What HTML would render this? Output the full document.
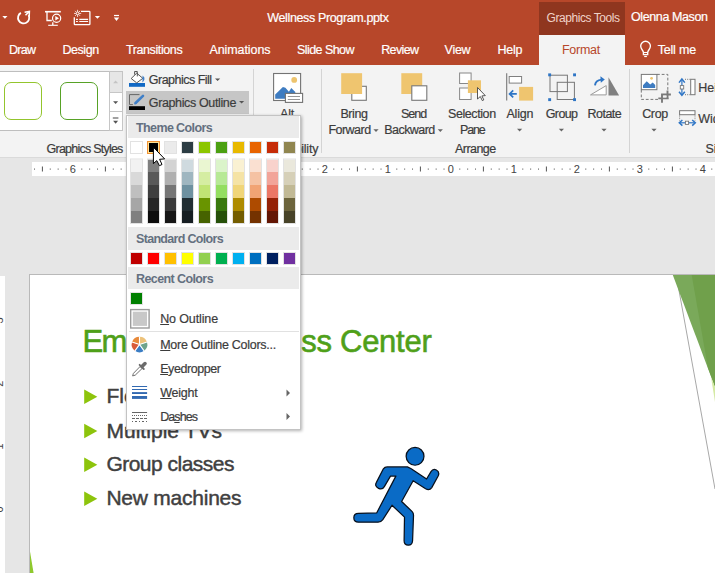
<!DOCTYPE html>
<html><head><meta charset="utf-8"><title>Wellness Program.pptx - PowerPoint</title>
<style>
html,body{margin:0;padding:0}
body{width:715px;height:573px;overflow:hidden;position:relative;background:#E6E6E6;font-family:"Liberation Sans","DejaVu Sans",sans-serif}
#r{position:absolute;left:0;top:0;width:715px;height:573px;overflow:hidden}
#r div,#r span,#r svg{position:absolute}
#r span{white-space:nowrap}
u{text-decoration:underline;text-underline-offset:1px}
</style></head><body><div id="r">
<div style="left:0px;top:0px;width:715px;height:65px;background:#B7472A;"></div>
<div style="left:539px;top:2px;width:86px;height:33px;background:#8F361F;"></div>
<div style="left:539px;top:35px;width:86px;height:30px;background:#F3F3F3;"></div>
<div style="left:0px;top:65px;width:715px;height:92px;background:#F3F3F3;"></div>
<div style="left:0px;top:157px;width:715px;height:1px;background:#DADADA;"></div>
<span id="t0" style="left:267.3px;top:8.70px;font:400 12.5px/18px 'Liberation Sans','DejaVu Sans',sans-serif;color:#fff;letter-spacing:-0.367px;-webkit-text-stroke:0.2px #fff;">Wellness Program.pptx</span>
<span id="t1" style="left:546.5px;top:9.50px;font:400 12px/17px 'Liberation Sans','DejaVu Sans',sans-serif;color:#F0D2C8;letter-spacing:-0.440px;">Graphics Tools</span>
<span id="t2" style="left:631px;top:8.00px;font:400 12.5px/18px 'Liberation Sans','DejaVu Sans',sans-serif;color:#fff;letter-spacing:-0.393px;-webkit-text-stroke:0.2px #fff;">Olenna Mason</span>
<span id="t3" style="left:9px;top:41.00px;font:400 12.5px/18px 'Liberation Sans','DejaVu Sans',sans-serif;color:#fff;letter-spacing:-0.743px;-webkit-text-stroke:0.2px #fff;">Draw</span>
<span id="t4" style="left:62.4px;top:41.00px;font:400 12.5px/18px 'Liberation Sans','DejaVu Sans',sans-serif;color:#fff;letter-spacing:-0.437px;-webkit-text-stroke:0.2px #fff;">Design</span>
<span id="t5" style="left:125.9px;top:41.00px;font:400 12.5px/18px 'Liberation Sans','DejaVu Sans',sans-serif;color:#fff;letter-spacing:-0.388px;-webkit-text-stroke:0.2px #fff;">Transitions</span>
<span id="t6" style="left:209.5px;top:41.00px;font:400 12.5px/18px 'Liberation Sans','DejaVu Sans',sans-serif;color:#fff;letter-spacing:-0.094px;-webkit-text-stroke:0.2px #fff;">Animations</span>
<span id="t7" style="left:297px;top:41.00px;font:400 12.5px/18px 'Liberation Sans','DejaVu Sans',sans-serif;color:#fff;letter-spacing:-0.555px;-webkit-text-stroke:0.2px #fff;">Slide Show</span>
<span id="t8" style="left:381.2px;top:41.00px;font:400 12.5px/18px 'Liberation Sans','DejaVu Sans',sans-serif;color:#fff;letter-spacing:-0.633px;-webkit-text-stroke:0.2px #fff;">Review</span>
<span id="t9" style="left:444.6px;top:41.00px;font:400 12.5px/18px 'Liberation Sans','DejaVu Sans',sans-serif;color:#fff;letter-spacing:-0.294px;-webkit-text-stroke:0.2px #fff;">View</span>
<span id="t10" style="left:497.5px;top:41.00px;font:400 12.5px/18px 'Liberation Sans','DejaVu Sans',sans-serif;color:#fff;letter-spacing:-0.255px;-webkit-text-stroke:0.2px #fff;">Help</span>
<span id="t11" style="left:562px;top:41.00px;font:400 12.5px/18px 'Liberation Sans','DejaVu Sans',sans-serif;color:#B7472A;letter-spacing:-0.266px;">Format</span>
<span id="t12" style="left:657.7px;top:41.00px;font:400 12.5px/18px 'Liberation Sans','DejaVu Sans',sans-serif;color:#fff;letter-spacing:-0.185px;-webkit-text-stroke:0.2px #fff;">Tell me</span>
<svg style="left:0;top:0" width="130" height="34" viewBox="0 0 130 34" fill="none" stroke="#fff" stroke-width="1.3">
<path d="M2.3 16 L7.5 16 L4.9 18.7 Z" fill="#fff" stroke="none"/>
<path d="M20.9 12.9 A5.6 5.6 0 1 0 28.6 15.2" stroke-width="1.8"/>
<path d="M24.6 12.2 L29.4 11.4 L29.2 16.4" stroke-width="1.5"/><path d="M25.5 15.3 L29.2 11.6" stroke-width="1.5"/>
<path d="M45 11.7 H60.8" stroke-width="1.6"/><path d="M47 12 V20.5 H51.8"/><path d="M48.2 25.3 H57.8" stroke-width="1.1"/><path d="M52.8 22.3 V25"/>
<circle cx="56.6" cy="18.3" r="4.1" stroke-width="1.2"/><path d="M55.3 16.1 L59 18.3 L55.3 20.5 Z" fill="#fff" stroke="none"/>
<path d="M81 11.4 H89.2 Q89.9 11.4 89.9 12.1 V24 Q89.9 24.7 89.2 24.7 H75 Q74.3 24.7 74.3 24 V17.2"/>
<path d="M79.3 19.4 H88.1 M79.3 21.5 H88.1 M76 19.4 H77.9 M76 21.5 H77.9" stroke-width="1.1"/>
<path d="M77.6 9.8 V17 M74 13.4 H81.2 M75.1 10.9 L80.1 15.9 M80.1 10.9 L75.1 15.9" stroke-width="0.8"/><circle cx="77.6" cy="13.4" r="1.3" fill="#B7472A" stroke-width="0.8"/>
<path d="M94.8 15.9 L100 15.9 L97.4 18.8 Z" fill="#fff" stroke="none"/>
<path d="M114 15.5 H119" stroke-width="1.2"/><path d="M113.8 17.6 L119.2 17.6 L116.5 20.9 Z" fill="#fff" stroke="none"/>
</svg>
<svg style="left:636px;top:38px" width="20" height="22" viewBox="636 38 20 22" fill="none" stroke="#fff" stroke-width="1.35">
<path d="M643.4 52.5 C643.4 50.4 640.7 49.3 640.7 46.1 A4.85 4.85 0 0 1 650.4 46.1 C650.4 49.3 647.7 50.4 647.7 52.5 V54.6 H643.4 Z"/><path d="M643.4 52.5 H647.7" stroke-width="1.1"/><path d="M644.2 56.5 H646.9" stroke-width="1.2"/></svg>
<div style="left:0px;top:71px;width:123px;height:60px;background:#fff;border:1px solid #BEBEBE;border-left:none;box-sizing:border-box"></div>
<div style="left:109px;top:71px;width:14px;height:21.5px;background:#E6E6E6;border:1px solid #C4C4C4;box-sizing:border-box"></div>
<div style="left:109px;top:91.5px;width:14px;height:20px;background:#fff;border:1px solid #C6C6C6;box-sizing:border-box"></div>
<div style="left:109px;top:110.5px;width:14px;height:20.5px;background:#fff;border:1px solid #C6C6C6;box-sizing:border-box"></div>
<svg style="left:109px;top:71px" width="14" height="60" viewBox="109 71 14 60"><path d="M113.1 83.2 L118.1 83.2 L115.6 80.4 Z" fill="#C4C4C4"/><path d="M113.1 101.2 L118.1 101.2 L115.6 104 Z" fill="#555"/><path d="M112.8 118 H118.4" stroke="#555" stroke-width="1.1"/><path d="M113.1 120.8 L118.1 120.8 L115.6 123.8 Z" fill="#555"/></svg>
<div style="left:4px;top:82px;width:38px;height:38px;background:#fff;border:1.4px solid #93C52D;border-radius:7px;box-sizing:border-box"></div>
<div style="left:60px;top:82px;width:38px;height:38px;background:#fff;border:1.4px solid #57A226;border-radius:7px;box-sizing:border-box"></div>
<span id="t13" style="left:46.6px;top:140.00px;font:400 12.5px/18px 'Liberation Sans','DejaVu Sans',sans-serif;color:#3C3C3C;letter-spacing:-0.769px;-webkit-text-stroke:0.2px #3C3C3C;">Graphics Styles</span>
<div style="left:126px;top:91px;width:123px;height:22.5px;background:#C6C6C6;"></div>
<span id="t14" style="left:148.8px;top:70.70px;font:400 12.5px/18px 'Liberation Sans','DejaVu Sans',sans-serif;color:#3C3C3C;letter-spacing:-0.513px;-webkit-text-stroke:0.2px #3C3C3C;">Graphics Fill</span>
<span id="t15" style="left:148.8px;top:94.20px;font:400 12.5px/18px 'Liberation Sans','DejaVu Sans',sans-serif;color:#3C3C3C;letter-spacing:-0.369px;-webkit-text-stroke:0.2px #3C3C3C;">Graphics Outline</span>
<svg style="left:124px;top:66px" width="130" height="50" viewBox="124 66 130 50">
<path d="M215 78.4 L220.2 78.4 L217.6 81 Z" fill="#555"/><path d="M239 101 L244.2 101 L241.6 103.6 Z" fill="#555"/>
<rect x="129" y="83" width="16" height="3.8" fill="#1168C4"/>
<path d="M131.2 78.5 L136.7 73.2 L142.8 78.3 L136.7 82.9 Z" fill="#fff" stroke="#444" stroke-width="0.9"/>
<path d="M134.6 74.6 V71.5 H137.3 V76.4" fill="none" stroke="#444" stroke-width="0.9"/>
<path d="M142.6 75.4 Q145.2 77.2 144.4 79.6 Q143.8 81.5 142.2 82.4 Q142.9 80.2 142.4 78.4 Z" fill="#3F7FC8"/>
<rect x="129" y="106.2" width="16" height="3.8" fill="#000"/>
<path d="M132.9 104.6 H129.5 V94.6 H139.5" fill="none" stroke="#666" stroke-width="1"/>
<path d="M135.6 103 L143 95.9" stroke="#3F7FC8" stroke-width="2.6" stroke-linecap="round"/><path d="M134.2 104.4 L135 101.8 L136.8 103.6 Z" fill="#3F7FC8"/>
</svg>
<div style="left:253px;top:69px;width:1px;height:84px;background:#D4D4D4;"></div>
<div style="left:321px;top:69px;width:1px;height:84px;background:#D4D4D4;"></div>
<div style="left:629px;top:69px;width:1px;height:84px;background:#D4D4D4;"></div>
<svg style="left:270px;top:70px" width="40" height="40" viewBox="270 70 40 40">
<rect x="273.6" y="73.5" width="27" height="27" fill="#fff" stroke="#737373" stroke-width="1.1"/>
<circle cx="294.2" cy="79.9" r="2.9" fill="#EDC46E"/>
<path d="M275.2 98.8 V94.4 L282.9 86.9 L285.4 87.8 L288.9 91.7 L291.3 88 L295.3 91.9 V98.8 Z" fill="#3E7CC1"/>
<rect x="285.4" y="93.4" width="17.2" height="9" fill="#fff" stroke="#737373" stroke-width="1.1"/><path d="M287.8 96.5 H300 M287.8 99.5 H300" stroke="#8A8A8A" stroke-width="0.9"/>
</svg>
<span id="t16" style="left:280px;top:105.30px;font:400 12.5px/18px 'Liberation Sans','DejaVu Sans',sans-serif;color:#3C3C3C;letter-spacing:-0.198px;-webkit-text-stroke:0.2px #3C3C3C;">Alt</span>
<span id="t17" style="left:276px;top:121.00px;font:400 12.5px/18px 'Liberation Sans','DejaVu Sans',sans-serif;color:#3C3C3C;letter-spacing:0.016px;-webkit-text-stroke:0.2px #3C3C3C;">Text</span>
<span id="t18" style="left:255.5px;top:140.00px;font:400 12.5px/18px 'Liberation Sans','DejaVu Sans',sans-serif;color:#3C3C3C;letter-spacing:-0.566px;-webkit-text-stroke:0.2px #3C3C3C;">Accessib</span>
<span id="t19" style="left:301.2px;top:140.00px;font:400 12.5px/18px 'Liberation Sans','DejaVu Sans',sans-serif;color:#3C3C3C;letter-spacing:-0.212px;-webkit-text-stroke:0.2px #3C3C3C;">ility</span>
<svg style="left:330px;top:68px" width="390" height="40" viewBox="0 0 390 40">
<rect x="21.8" y="18.3" width="14.5" height="14" fill="#fff" stroke="#777" stroke-width="1.1"/><rect x="11.2" y="5.2" width="20.9" height="20.8" fill="#EFC56F"/>
<rect x="71.3" y="5.2" width="20.9" height="20.8" fill="#EFC56F"/><rect x="81.8" y="17.8" width="15" height="14.5" fill="#fff" stroke="#777" stroke-width="1.1"/>
<rect x="129.6" y="5" width="11.5" height="10.5" fill="#fff" stroke="#888" stroke-width="1"/><rect x="129.6" y="20" width="11.5" height="11.5" fill="#fff" stroke="#888" stroke-width="1"/><rect x="137.9" y="12.3" width="13.1" height="12.7" fill="#EFC56F"/>
<path d="M147.5 19.5 V31 L150.3 28.5 L152.3 32.6 L153.8 31.9 L151.9 27.9 L155.3 27.6 Z" fill="#fff" stroke="#444" stroke-width="0.9"/>
</svg>
<svg style="left:500px;top:68px" width="130" height="40" viewBox="500 68 130 40">
<path d="M506.7 73.3 V100.6" stroke="#777" stroke-width="1.1"/>
<rect x="509.2" y="76.5" width="12.4" height="6.6" fill="#fff" stroke="#808080" stroke-width="1"/>
<rect x="519.1" y="86.9" width="14" height="13.7" fill="#EFC56F"/>
<path d="M516.8 93.9 H510 M513.2 90.4 L509.6 93.9 L513.2 97.4" fill="none" stroke="#2E75C5" stroke-width="1.7"/>
<rect x="550" y="75.2" width="17.4" height="16.4" fill="none" stroke="#777" stroke-width="1"/>
<rect x="557.2" y="82.3" width="17.2" height="17.2" fill="none" stroke="#777" stroke-width="1"/>
<g fill="#2E75C5"><rect x="548.2" y="73.4" width="2.9" height="2.9"/><rect x="573.1" y="73.4" width="2.9" height="2.9"/><rect x="548.2" y="98.2" width="2.9" height="2.9"/><rect x="573.1" y="98.2" width="2.9" height="2.9"/></g>
<path d="M608.5 77.3 V95.5 H619.1 Z" fill="#808080"/>
<path d="M590.5 94.9 L606.2 85.6 V94.9 Z" fill="#fff" stroke="#9A9A9A" stroke-width="1"/>
<path d="M595 85.3 Q595.4 80.4 601.6 79.6" fill="none" stroke="#2E75C5" stroke-width="1.9"/><path d="M600.4 76.2 L604.8 79.4 L600.8 82.8 Z" fill="#2E75C5"/>
</svg>
<svg style="left:636px;top:70px" width="79" height="62" viewBox="636 70 79 62">
<path d="M657 74.4 H667.8 V89.8 M641.3 89.8 V99.4 H658.6" fill="none" stroke="#777" stroke-width="1" stroke-dasharray="2.8 1.9"/>
<rect x="641.3" y="74.4" width="15.6" height="15.3" fill="#fff" stroke="#777" stroke-width="1"/>
<circle cx="651.6" cy="78.3" r="1.4" fill="#EDC46E"/>
<path d="M643 88 V85.2 L646.7 81.3 L650.2 84.5 L652.7 82.4 L655.2 85 V88 Z" fill="#3E7CC1"/>
<path d="M662 93.5 V102.7 M658.3 98.4 H668.7 M662 94.5 H670.9 M667.5 90.5 V99.3" stroke="#7A7A7A" stroke-width="1.9" fill="none"/>
<rect x="663.2" y="95.6" width="3.2" height="1.8" fill="#F3F3F3"/>
<path d="M681.9 80 V94.3" stroke="#2E75C5" stroke-width="1.2"/><path d="M679 82.6 L681.9 79 L684.8 82.6 M679 91.7 L681.9 95.3 L684.8 91.7" fill="none" stroke="#2E75C5" stroke-width="1.5"/>
<rect x="680.3" y="85.6" width="3.4" height="3.4" fill="#fff" stroke="#777" stroke-width="0.9"/>
<path d="M685 79.3 H690.5 M685 94.7 H690.5" stroke="#777" stroke-width="1" stroke-dasharray="1 1.2"/>
<rect x="690.7" y="79.3" width="4.3" height="15.4" fill="#fff" stroke="#777" stroke-width="1"/>
<rect x="679.6" y="110.7" width="15.4" height="4" fill="#fff" stroke="#777" stroke-width="1"/>
<path d="M679.6 115.5 V120.5 M695 115.5 V120.5" stroke="#777" stroke-width="1" stroke-dasharray="1 1.2"/>
<path d="M680 122.8 H694.6" stroke="#2E75C5" stroke-width="1.2"/><path d="M682.4 120 L679.3 122.8 L682.4 125.6 M692.2 120 L695.3 122.8 L692.2 125.6" fill="none" stroke="#2E75C5" stroke-width="1.5"/>
<rect x="685.4" y="121.2" width="3.2" height="3.2" fill="#fff" stroke="#777" stroke-width="0.9"/>
</svg>
<span id="t20" style="left:340.4px;top:105.30px;font:400 12.5px/18px 'Liberation Sans','DejaVu Sans',sans-serif;color:#3C3C3C;letter-spacing:-0.417px;-webkit-text-stroke:0.2px #3C3C3C;">Bring</span>
<span id="t21" style="left:328.4px;top:121.00px;font:400 12.5px/18px 'Liberation Sans','DejaVu Sans',sans-serif;color:#3C3C3C;letter-spacing:-0.521px;-webkit-text-stroke:0.2px #3C3C3C;">Forward</span>
<span id="t22" style="left:401px;top:105.30px;font:400 12.5px/18px 'Liberation Sans','DejaVu Sans',sans-serif;color:#3C3C3C;letter-spacing:-0.976px;-webkit-text-stroke:0.2px #3C3C3C;">Send</span>
<span id="t23" style="left:384.3px;top:121.00px;font:400 12.5px/18px 'Liberation Sans','DejaVu Sans',sans-serif;color:#3C3C3C;letter-spacing:-0.561px;-webkit-text-stroke:0.2px #3C3C3C;">Backward</span>
<span id="t24" style="left:448px;top:105.30px;font:400 12.5px/18px 'Liberation Sans','DejaVu Sans',sans-serif;color:#3C3C3C;letter-spacing:-0.415px;-webkit-text-stroke:0.2px #3C3C3C;">Selection</span>
<span id="t25" style="left:460px;top:121.00px;font:400 12.5px/18px 'Liberation Sans','DejaVu Sans',sans-serif;color:#3C3C3C;letter-spacing:-1.176px;-webkit-text-stroke:0.2px #3C3C3C;">Pane</span>
<span id="t26" style="left:506.4px;top:105.30px;font:400 12.5px/18px 'Liberation Sans','DejaVu Sans',sans-serif;color:#3C3C3C;letter-spacing:-0.159px;-webkit-text-stroke:0.2px #3C3C3C;">Align</span>
<span id="t27" style="left:545.7px;top:105.30px;font:400 12.5px/18px 'Liberation Sans','DejaVu Sans',sans-serif;color:#3C3C3C;letter-spacing:-0.590px;-webkit-text-stroke:0.2px #3C3C3C;">Group</span>
<span id="t28" style="left:587.5px;top:105.30px;font:400 12.5px/18px 'Liberation Sans','DejaVu Sans',sans-serif;color:#3C3C3C;letter-spacing:-0.524px;-webkit-text-stroke:0.2px #3C3C3C;">Rotate</span>
<span id="t29" style="left:642.2px;top:105.30px;font:400 12.5px/18px 'Liberation Sans','DejaVu Sans',sans-serif;color:#3C3C3C;letter-spacing:-0.373px;-webkit-text-stroke:0.2px #3C3C3C;">Crop</span>
<span id="t30" style="left:698.2px;top:78.60px;font:400 12.5px/18px 'Liberation Sans','DejaVu Sans',sans-serif;color:#3C3C3C;letter-spacing:0.000px;-webkit-text-stroke:0.2px #3C3C3C;">Height:</span>
<span id="t31" style="left:698.2px;top:109.80px;font:400 12.5px/18px 'Liberation Sans','DejaVu Sans',sans-serif;color:#3C3C3C;letter-spacing:0.000px;-webkit-text-stroke:0.2px #3C3C3C;">Width:</span>
<span id="t32" style="left:455px;top:139.90px;font:400 12.5px/18px 'Liberation Sans','DejaVu Sans',sans-serif;color:#3C3C3C;letter-spacing:-0.541px;-webkit-text-stroke:0.2px #3C3C3C;">Arrange</span>
<span id="t33" style="left:705.5px;top:139.90px;font:400 12.5px/18px 'Liberation Sans','DejaVu Sans',sans-serif;color:#3C3C3C;letter-spacing:0.000px;-webkit-text-stroke:0.2px #3C3C3C;">Size</span>
<svg style="left:0;top:120px" width="715" height="20" viewBox="0 120 715 20"><path d="M373.4 129.2 L378.6 129.2 L376 132.0 Z" fill="#666"/><path d="M437.7 129.2 L442.90000000000003 129.2 L440.3 132.0 Z" fill="#666"/><path d="M517.0 128.7 L522.2 128.7 L519.6 131.5 Z" fill="#666"/><path d="M558.8 128.7 L564.0 128.7 L561.4 131.5 Z" fill="#666"/><path d="M601.4 128.7 L606.6 128.7 L604 131.5 Z" fill="#666"/><path d="M651.4 128.7 L656.6 128.7 L654 131.5 Z" fill="#666"/></svg>
<div style="left:32px;top:162px;width:683px;height:14px;background:#fff;"></div>
<svg style="left:0;top:160px" width="715" height="18" viewBox="0 160 715 18"><rect x="34.02" y="168.5" width="1" height="1.2" fill="#666"/><rect x="41.90" y="166.5" width="1" height="5" fill="#555"/><rect x="49.77" y="168.5" width="1" height="1.2" fill="#666"/><rect x="57.65" y="168.5" width="1" height="1.2" fill="#666"/><rect x="65.52" y="168.5" width="1" height="1.2" fill="#666"/><rect x="81.27" y="168.5" width="1" height="1.2" fill="#666"/><rect x="89.15" y="168.5" width="1" height="1.2" fill="#666"/><rect x="97.02" y="168.5" width="1" height="1.2" fill="#666"/><rect x="104.90" y="166.5" width="1" height="5" fill="#555"/><rect x="112.77" y="168.5" width="1" height="1.2" fill="#666"/><rect x="120.65" y="168.5" width="1" height="1.2" fill="#666"/><rect x="128.52" y="168.5" width="1" height="1.2" fill="#666"/><rect x="144.27" y="168.5" width="1" height="1.2" fill="#666"/><rect x="152.15" y="168.5" width="1" height="1.2" fill="#666"/><rect x="160.02" y="168.5" width="1" height="1.2" fill="#666"/><rect x="167.90" y="166.5" width="1" height="5" fill="#555"/><rect x="175.77" y="168.5" width="1" height="1.2" fill="#666"/><rect x="183.65" y="168.5" width="1" height="1.2" fill="#666"/><rect x="191.52" y="168.5" width="1" height="1.2" fill="#666"/><rect x="207.27" y="168.5" width="1" height="1.2" fill="#666"/><rect x="215.15" y="168.5" width="1" height="1.2" fill="#666"/><rect x="223.02" y="168.5" width="1" height="1.2" fill="#666"/><rect x="230.90" y="166.5" width="1" height="5" fill="#555"/><rect x="238.77" y="168.5" width="1" height="1.2" fill="#666"/><rect x="246.65" y="168.5" width="1" height="1.2" fill="#666"/><rect x="254.52" y="168.5" width="1" height="1.2" fill="#666"/><rect x="270.27" y="168.5" width="1" height="1.2" fill="#666"/><rect x="278.15" y="168.5" width="1" height="1.2" fill="#666"/><rect x="286.02" y="168.5" width="1" height="1.2" fill="#666"/><rect x="293.90" y="166.5" width="1" height="5" fill="#555"/><rect x="301.77" y="168.5" width="1" height="1.2" fill="#666"/><rect x="309.65" y="168.5" width="1" height="1.2" fill="#666"/><rect x="317.52" y="168.5" width="1" height="1.2" fill="#666"/><rect x="333.27" y="168.5" width="1" height="1.2" fill="#666"/><rect x="341.15" y="168.5" width="1" height="1.2" fill="#666"/><rect x="349.02" y="168.5" width="1" height="1.2" fill="#666"/><rect x="356.90" y="166.5" width="1" height="5" fill="#555"/><rect x="364.77" y="168.5" width="1" height="1.2" fill="#666"/><rect x="372.65" y="168.5" width="1" height="1.2" fill="#666"/><rect x="380.52" y="168.5" width="1" height="1.2" fill="#666"/><rect x="396.27" y="168.5" width="1" height="1.2" fill="#666"/><rect x="404.15" y="168.5" width="1" height="1.2" fill="#666"/><rect x="412.02" y="168.5" width="1" height="1.2" fill="#666"/><rect x="419.90" y="166.5" width="1" height="5" fill="#555"/><rect x="427.77" y="168.5" width="1" height="1.2" fill="#666"/><rect x="435.65" y="168.5" width="1" height="1.2" fill="#666"/><rect x="443.52" y="168.5" width="1" height="1.2" fill="#666"/><rect x="459.27" y="168.5" width="1" height="1.2" fill="#666"/><rect x="467.15" y="168.5" width="1" height="1.2" fill="#666"/><rect x="475.02" y="168.5" width="1" height="1.2" fill="#666"/><rect x="482.90" y="166.5" width="1" height="5" fill="#555"/><rect x="490.77" y="168.5" width="1" height="1.2" fill="#666"/><rect x="498.65" y="168.5" width="1" height="1.2" fill="#666"/><rect x="506.52" y="168.5" width="1" height="1.2" fill="#666"/><rect x="522.27" y="168.5" width="1" height="1.2" fill="#666"/><rect x="530.15" y="168.5" width="1" height="1.2" fill="#666"/><rect x="538.02" y="168.5" width="1" height="1.2" fill="#666"/><rect x="545.90" y="166.5" width="1" height="5" fill="#555"/><rect x="553.77" y="168.5" width="1" height="1.2" fill="#666"/><rect x="561.65" y="168.5" width="1" height="1.2" fill="#666"/><rect x="569.52" y="168.5" width="1" height="1.2" fill="#666"/><rect x="585.27" y="168.5" width="1" height="1.2" fill="#666"/><rect x="593.15" y="168.5" width="1" height="1.2" fill="#666"/><rect x="601.02" y="168.5" width="1" height="1.2" fill="#666"/><rect x="608.90" y="166.5" width="1" height="5" fill="#555"/><rect x="616.77" y="168.5" width="1" height="1.2" fill="#666"/><rect x="624.65" y="168.5" width="1" height="1.2" fill="#666"/><rect x="632.52" y="168.5" width="1" height="1.2" fill="#666"/><rect x="648.27" y="168.5" width="1" height="1.2" fill="#666"/><rect x="656.15" y="168.5" width="1" height="1.2" fill="#666"/><rect x="664.02" y="168.5" width="1" height="1.2" fill="#666"/><rect x="671.90" y="166.5" width="1" height="5" fill="#555"/><rect x="679.77" y="168.5" width="1" height="1.2" fill="#666"/><rect x="687.65" y="168.5" width="1" height="1.2" fill="#666"/><rect x="695.52" y="168.5" width="1" height="1.2" fill="#666"/><rect x="711.27" y="168.5" width="1" height="1.2" fill="#666"/></svg>
<span id="t34" style="left:69.79999999999998px;top:161.80px;font:400 11px/15px 'Liberation Sans','DejaVu Sans',sans-serif;color:#444;letter-spacing:0.000px;">6</span>
<span id="t35" style="left:132.79999999999998px;top:161.80px;font:400 11px/15px 'Liberation Sans','DejaVu Sans',sans-serif;color:#444;letter-spacing:0.000px;">5</span>
<span id="t36" style="left:195.79999999999998px;top:161.80px;font:400 11px/15px 'Liberation Sans','DejaVu Sans',sans-serif;color:#444;letter-spacing:0.000px;">4</span>
<span id="t37" style="left:258.79999999999995px;top:161.80px;font:400 11px/15px 'Liberation Sans','DejaVu Sans',sans-serif;color:#444;letter-spacing:0.000px;">3</span>
<span id="t38" style="left:321.79999999999995px;top:161.80px;font:400 11px/15px 'Liberation Sans','DejaVu Sans',sans-serif;color:#444;letter-spacing:0.000px;">2</span>
<span id="t39" style="left:384.79999999999995px;top:161.80px;font:400 11px/15px 'Liberation Sans','DejaVu Sans',sans-serif;color:#444;letter-spacing:0.000px;">1</span>
<span id="t40" style="left:447.79999999999995px;top:161.80px;font:400 11px/15px 'Liberation Sans','DejaVu Sans',sans-serif;color:#444;letter-spacing:0.000px;">0</span>
<span id="t41" style="left:510.79999999999995px;top:161.80px;font:400 11px/15px 'Liberation Sans','DejaVu Sans',sans-serif;color:#444;letter-spacing:0.000px;">1</span>
<span id="t42" style="left:573.8px;top:161.80px;font:400 11px/15px 'Liberation Sans','DejaVu Sans',sans-serif;color:#444;letter-spacing:0.000px;">2</span>
<span id="t43" style="left:636.8px;top:161.80px;font:400 11px/15px 'Liberation Sans','DejaVu Sans',sans-serif;color:#444;letter-spacing:0.000px;">3</span>
<span id="t44" style="left:699.8px;top:161.80px;font:400 11px/15px 'Liberation Sans','DejaVu Sans',sans-serif;color:#444;letter-spacing:0.000px;">4</span>
<div style="left:0px;top:276px;width:5px;height:297px;background:#fff;"></div>
<svg style="left:0;top:276px" width="5" height="297" viewBox="0 276 5 297" font-family="Liberation Sans, sans-serif" font-size="11" fill="#444" text-anchor="middle"><text x="3.2" y="320.5" transform="rotate(-90 3.2 320.5)">3</text><text x="3.2" y="383.7" transform="rotate(-90 3.2 383.7)">2</text><text x="3.2" y="446.5" transform="rotate(-90 3.2 446.5)">1</text><text x="3.2" y="509.5" transform="rotate(-90 3.2 509.5)">0</text></svg>
<div style="left:29px;top:274px;width:700px;height:310px;background:#fff;border:1px solid #B9B9B9"></div>
<svg style="left:600px;top:275px" width="115" height="298" viewBox="600 275 115 298">
<path d="M676.2 275 L715 489" stroke="#A8A8A8" stroke-width="1" fill="none"/>
<path d="M672.8 275 L715 275 L715 387 Z" fill="#7AA95A"/>
<path d="M691.7 275 L715 275 L715 387 L708 368 Z" fill="#70A04B"/>
<path d="M711 377 L715 387 L715 402 Z" fill="#D5EAA5"/>
</svg>
<svg style="left:29px;top:540px" width="10" height="33" viewBox="29 540 10 33"><path d="M30 551.5 L33.6 573 L30 573 Z" fill="#8FC92E"/></svg>
<span id="t45" style="left:82.6px;top:319.50px;font:400 31px/43px 'Liberation Sans','DejaVu Sans',sans-serif;color:#4FA019;letter-spacing:-1.750px;-webkit-text-stroke:0.6px #4FA019;">Em</span>
<span id="t46" style="left:126.4px;top:319.50px;font:400 31px/43px 'Liberation Sans','DejaVu Sans',sans-serif;color:#4FA019;letter-spacing:0.476px;-webkit-text-stroke:0.6px #4FA019;">ployee Fitne</span>
<span id="t47" style="left:301.2px;top:319.50px;font:400 31px/43px 'Liberation Sans','DejaVu Sans',sans-serif;color:#4FA019;letter-spacing:-0.264px;-webkit-text-stroke:0.6px #4FA019;">ss Center</span>
<span id="t48" style="left:106.4px;top:380.50px;font:400 21px/29px 'Liberation Sans','DejaVu Sans',sans-serif;color:#404040;letter-spacing:0.000px;-webkit-text-stroke:0.45px #404040;">Flexible hours</span>
<span id="t49" style="left:106.4px;top:415.50px;font:400 21px/29px 'Liberation Sans','DejaVu Sans',sans-serif;color:#404040;letter-spacing:0.037px;-webkit-text-stroke:0.45px #404040;">Multiple TVs</span>
<span id="t50" style="left:106.4px;top:449.00px;font:400 21px/29px 'Liberation Sans','DejaVu Sans',sans-serif;color:#404040;letter-spacing:-0.510px;-webkit-text-stroke:0.45px #404040;">Group classes</span>
<span id="t51" style="left:106.4px;top:482.60px;font:400 21px/29px 'Liberation Sans','DejaVu Sans',sans-serif;color:#404040;letter-spacing:-0.236px;-webkit-text-stroke:0.45px #404040;">New machines</span>
<svg style="left:80px;top:380px" width="20" height="130" viewBox="80 380 20 130"><path d="M84.2 389.6 L97.3 396.8 L84.2 404.0 Z" fill="#8DC40C"/><path d="M84.2 423.8 L97.3 431 L84.2 438.2 Z" fill="#8DC40C"/><path d="M84.2 457.6 L97.3 464.8 L84.2 472.0 Z" fill="#8DC40C"/><path d="M84.2 491.6 L97.3 498.8 L84.2 506.0 Z" fill="#8DC40C"/></svg>
<svg style="left:345px;top:440px" width="100" height="110" viewBox="0 0 521 573">
<g fill="#0A6BC6" stroke="#08101C" stroke-width="6.5" stroke-linejoin="round">
<circle cx="365" cy="85" r="46.5"/>
<path d="M200 150 Q207 140 220 140 L325 140 L345 150 L425 203 L448 165 Q458 148 476 156 Q494 166 486 186 L452 248 Q440 266 420 254 L355 212 L295 320 L350 373 Q357 380 357 392 L352 525 Q350 548 330 548 Q308 548 308 525 L310 402 L245 340 L197 415 Q188 428 172 428 L70 428 Q46 428 46 405 Q46 382 70 382 L165 380 L265 188 L237 188 L205 243 Q195 260 175 252 Q153 240 163 222 Z"/>
</g></svg>
<div style="left:126px;top:114.6px;width:174.5px;height:315.8px;background:#fff;border:1px solid #C3C3C3;box-sizing:border-box;box-shadow:1px 1px 3px rgba(0,0,0,.3)"></div>
<div style="left:128px;top:115.7px;width:171px;height:22.8px;background:#EBEBEB;"></div>
<div style="left:128px;top:227px;width:171px;height:22.7px;background:#EBEBEB;"></div>
<div style="left:128px;top:267.3px;width:171px;height:22.2px;background:#EBEBEB;"></div>
<span id="t52" style="left:136px;top:118.60px;font:700 12.5px/18px 'Liberation Sans','DejaVu Sans',sans-serif;color:#647080;letter-spacing:-0.613px;">Theme Colors</span>
<span id="t53" style="left:136px;top:229.70px;font:700 12.5px/18px 'Liberation Sans','DejaVu Sans',sans-serif;color:#647080;letter-spacing:-0.683px;">Standard Colors</span>
<span id="t54" style="left:136px;top:269.60px;font:700 12.5px/18px 'Liberation Sans','DejaVu Sans',sans-serif;color:#647080;letter-spacing:-0.596px;">Recent Colors</span>
<svg style="left:0;top:0" width="715" height="573" viewBox="0 0 715 573"><rect x="130.5" y="141.5" width="12" height="12" fill="#FFFFFF" stroke="#E2E2E2"/><rect x="131" y="159.5" width="11" height="12.5" fill="#F2F2F2"/><rect x="131" y="172" width="11" height="13" fill="#D9D9D9"/><rect x="131" y="185" width="11" height="13" fill="#BFBFBF"/><rect x="131" y="198" width="11" height="13" fill="#A6A6A6"/><rect x="131" y="211" width="11" height="12.300000000000011" fill="#808080"/><rect x="130.5" y="159" width="12" height="64.5" fill="none" stroke="#E2E2E2"/><rect x="147.5" y="141.5" width="12" height="12" fill="#000000" stroke="#E2E2E2"/><rect x="148" y="159.5" width="11" height="12.5" fill="#7F7F7F"/><rect x="148" y="172" width="11" height="13" fill="#595959"/><rect x="148" y="185" width="11" height="13" fill="#3F3F3F"/><rect x="148" y="198" width="11" height="13" fill="#262626"/><rect x="148" y="211" width="11" height="12.300000000000011" fill="#0D0D0D"/><rect x="147.5" y="159" width="12" height="64.5" fill="none" stroke="#E2E2E2"/><rect x="164.5" y="141.5" width="12" height="12" fill="#EBEBEB" stroke="#E2E2E2"/><rect x="165" y="159.5" width="11" height="12.5" fill="#D3D3D3"/><rect x="165" y="172" width="11" height="13" fill="#B0B0B0"/><rect x="165" y="185" width="11" height="13" fill="#767676"/><rect x="165" y="198" width="11" height="13" fill="#3B3B3B"/><rect x="165" y="211" width="11" height="12.300000000000011" fill="#171717"/><rect x="164.5" y="159" width="12" height="64.5" fill="none" stroke="#E2E2E2"/><rect x="181.5" y="141.5" width="12" height="12" fill="#2C3C43" stroke="#E2E2E2"/><rect x="182" y="159.5" width="11" height="12.5" fill="#CFDADF"/><rect x="182" y="172" width="11" height="13" fill="#9FB6C0"/><rect x="182" y="185" width="11" height="13" fill="#6E91A0"/><rect x="182" y="198" width="11" height="13" fill="#212D32"/><rect x="182" y="211" width="11" height="12.300000000000011" fill="#161E22"/><rect x="181.5" y="159" width="12" height="64.5" fill="none" stroke="#E2E2E2"/><rect x="198.5" y="141.5" width="12" height="12" fill="#8CC600" stroke="#E2E2E2"/><rect x="199" y="159.5" width="11" height="12.5" fill="#EAF6D1"/><rect x="199" y="172" width="11" height="13" fill="#D5EDA2"/><rect x="199" y="185" width="11" height="13" fill="#C0E474"/><rect x="199" y="198" width="11" height="13" fill="#699400"/><rect x="199" y="211" width="11" height="12.300000000000011" fill="#466300"/><rect x="198.5" y="159" width="12" height="64.5" fill="none" stroke="#E2E2E2"/><rect x="215.5" y="141.5" width="12" height="12" fill="#4CA012" stroke="#E2E2E2"/><rect x="216" y="159.5" width="11" height="12.5" fill="#DBF4CA"/><rect x="216" y="172" width="11" height="13" fill="#B7E996"/><rect x="216" y="185" width="11" height="13" fill="#94DE61"/><rect x="216" y="198" width="11" height="13" fill="#39780D"/><rect x="216" y="211" width="11" height="12.300000000000011" fill="#265009"/><rect x="215.5" y="159" width="12" height="64.5" fill="none" stroke="#E2E2E2"/><rect x="232.5" y="141.5" width="12" height="12" fill="#E8B900" stroke="#E2E2E2"/><rect x="233" y="159.5" width="11" height="12.5" fill="#FAF1D2"/><rect x="233" y="172" width="11" height="13" fill="#F5E3A5"/><rect x="233" y="185" width="11" height="13" fill="#F0D578"/><rect x="233" y="198" width="11" height="13" fill="#AE8B00"/><rect x="233" y="211" width="11" height="12.300000000000011" fill="#745D00"/><rect x="232.5" y="159" width="12" height="64.5" fill="none" stroke="#E2E2E2"/><rect x="249.5" y="141.5" width="12" height="12" fill="#E86400" stroke="#E2E2E2"/><rect x="250" y="159.5" width="11" height="12.5" fill="#FAE0D1"/><rect x="250" y="172" width="11" height="13" fill="#F5C2A3"/><rect x="250" y="185" width="11" height="13" fill="#F1A374"/><rect x="250" y="198" width="11" height="13" fill="#AE4B00"/><rect x="250" y="211" width="11" height="12.300000000000011" fill="#743200"/><rect x="249.5" y="159" width="12" height="64.5" fill="none" stroke="#E2E2E2"/><rect x="266.5" y="141.5" width="12" height="12" fill="#C62C08" stroke="#E2E2E2"/><rect x="267" y="159.5" width="11" height="12.5" fill="#F8D2CC"/><rect x="267" y="172" width="11" height="13" fill="#F2A499"/><rect x="267" y="185" width="11" height="13" fill="#EB7766"/><rect x="267" y="198" width="11" height="13" fill="#942106"/><rect x="267" y="211" width="11" height="12.300000000000011" fill="#631604"/><rect x="266.5" y="159" width="12" height="64.5" fill="none" stroke="#E2E2E2"/><rect x="283.5" y="141.5" width="12" height="12" fill="#908650" stroke="#E2E2E2"/><rect x="284" y="159.5" width="11" height="12.5" fill="#EAE8DC"/><rect x="284" y="172" width="11" height="13" fill="#D6D0B8"/><rect x="284" y="185" width="11" height="13" fill="#C1B995"/><rect x="284" y="198" width="11" height="13" fill="#6C643C"/><rect x="284" y="211" width="11" height="12.300000000000011" fill="#484328"/><rect x="283.5" y="159" width="12" height="64.5" fill="none" stroke="#E2E2E2"/><rect x="130.5" y="252.5" width="12" height="12" fill="#C00000" stroke="#E2E2E2"/><rect x="147.5" y="252.5" width="12" height="12" fill="#FF0000" stroke="#E2E2E2"/><rect x="164.5" y="252.5" width="12" height="12" fill="#FFC000" stroke="#E2E2E2"/><rect x="181.5" y="252.5" width="12" height="12" fill="#FFFF00" stroke="#E2E2E2"/><rect x="198.5" y="252.5" width="12" height="12" fill="#92D050" stroke="#E2E2E2"/><rect x="215.5" y="252.5" width="12" height="12" fill="#00B050" stroke="#E2E2E2"/><rect x="232.5" y="252.5" width="12" height="12" fill="#00B0F0" stroke="#E2E2E2"/><rect x="249.5" y="252.5" width="12" height="12" fill="#0070C0" stroke="#E2E2E2"/><rect x="266.5" y="252.5" width="12" height="12" fill="#002060" stroke="#E2E2E2"/><rect x="283.5" y="252.5" width="12" height="12" fill="#7030A0" stroke="#E2E2E2"/><rect x="130.5" y="292.5" width="12" height="12" fill="#008000" stroke="#E2E2E2"/><rect x="147.5" y="141.5" width="12" height="12" fill="#000" stroke="#F29436" stroke-width="1"/><rect x="148.5" y="142.5" width="10" height="10" fill="none" stroke="#FFE294" stroke-width="1"/></svg>
<div style="left:129px;top:331px;width:170px;height:1px;background:#E1E1E1;"></div>
<svg style="left:128px;top:306px" width="172" height="124" viewBox="128 306 172 124">
<rect x="130.7" y="309.6" width="18.4" height="18.4" fill="#fff" stroke="#9C9C9C" stroke-width="1.4"/><rect x="132.8" y="311.7" width="14.2" height="14.2" fill="#C8C8C8"/>
<g transform="translate(139.5 344.5)"><path d="M0 0 L0.00 -7.80 A7.8 7.8 0 0 1 7.42 -2.41 Z" fill="#EDC27A"/><path d="M0 0 L7.42 -2.41 A7.8 7.8 0 0 1 4.58 6.31 Z" fill="#6FA48C"/><path d="M0 0 L4.58 6.31 A7.8 7.8 0 0 1 -4.58 6.31 Z" fill="#3B7DC4"/><path d="M0 0 L-4.58 6.31 A7.8 7.8 0 0 1 -7.42 -2.41 Z" fill="#D85B3A"/><path d="M0 0 L-7.42 -2.41 A7.8 7.8 0 0 1 -0.00 -7.80 Z" fill="#E8893A"/><path d="M0 0 L0 0 L0.00 -7.80 L0 0 L7.42 -2.41 L0 0 L4.58 6.31 L0 0 L-4.58 6.31 L0 0 L-7.42 -2.41 " stroke="#fff" stroke-width="1.1" fill="none"/></g>
<path d="M132.6 375.9 L133.4 373.4 L140.2 366.4 L142.2 368.4 L135.2 375.2 Z" fill="#fff" stroke="#707070" stroke-width="1"/><path d="M139.6 364.8 L143.8 369" stroke="#6B6B6B" stroke-width="1.8" stroke-linecap="round"/><path d="M142 366.6 L145 363.6" stroke="#6B6B6B" stroke-width="3.6" stroke-linecap="round"/>
<g fill="#3269B1"><rect x="132" y="386" width="15.1" height="1"/><rect x="132" y="389" width="15.1" height="1"/><rect x="132" y="392.1" width="15.1" height="1.9"/><rect x="132" y="396" width="15.1" height="2.9"/></g>
<g stroke="#666" stroke-width="1" fill="none"><path d="M132 412.5 H147.1"/><path d="M132 415.5 H147.1" stroke-dasharray="1 1"/><path d="M132 418.5 H147.1" stroke-dasharray="3 1"/><path d="M132 421.5 H147.1" stroke-dasharray="1 2 2 2"/></g>
<path d="M286.5 389.5 L290 393 L286.5 396.5 Z" fill="#666"/><path d="M286.5 413 L290 416.5 L286.5 420 Z" fill="#666"/>
</svg>
<span id="t55" style="left:160.2px;top:309.70px;font:400 12.5px/18px 'Liberation Sans','DejaVu Sans',sans-serif;color:#3C3C3C;letter-spacing:-0.126px;-webkit-text-stroke:0.2px #3C3C3C;"><u>N</u>o Outline</span>
<span id="t56" style="left:160.2px;top:335.80px;font:400 12.5px/18px 'Liberation Sans','DejaVu Sans',sans-serif;color:#3C3C3C;letter-spacing:-0.263px;-webkit-text-stroke:0.2px #3C3C3C;"><u>M</u>ore Outline Colors...</span>
<span id="t57" style="left:160.2px;top:360.00px;font:400 12.5px/18px 'Liberation Sans','DejaVu Sans',sans-serif;color:#3C3C3C;letter-spacing:-0.434px;-webkit-text-stroke:0.2px #3C3C3C;"><u>E</u>yedropper</span>
<span id="t58" style="left:160.2px;top:384.00px;font:400 12.5px/18px 'Liberation Sans','DejaVu Sans',sans-serif;color:#3C3C3C;letter-spacing:-0.215px;-webkit-text-stroke:0.2px #3C3C3C;"><u>W</u>eight</span>
<span id="t59" style="left:160.2px;top:408.00px;font:400 12.5px/18px 'Liberation Sans','DejaVu Sans',sans-serif;color:#3C3C3C;letter-spacing:-0.932px;-webkit-text-stroke:0.2px #3C3C3C;">Da<u>s</u>hes</span>
<svg style="left:150px;top:142px" width="18" height="26" viewBox="0 0 18 26"><path d="M3.4 5.2 V21.6 L6.8 18.6 L9.4 23.7 L12 22.5 L9.6 17.3 L14.6 16.9 Z" fill="#fff" stroke="#000" stroke-width="1" stroke-linejoin="miter"/></svg>
</div></body></html>
